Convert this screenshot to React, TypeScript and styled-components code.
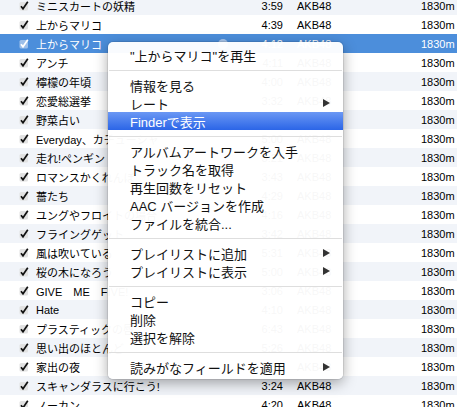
import * as React from 'react';
import styled, { createGlobalStyle } from 'styled-components';

const GlobalStyle = createGlobalStyle`
    html, body {
        margin: 0;
        padding: 0;
        background: #fff;
        overflow: hidden;
    }
    body {
        font-family: "Liberation Sans", "Noto Sans CJK JP", sans-serif;
    }
`

const Page = styled.div`
    position: relative;
    width: 457px;
    height: 407px;
    overflow: hidden;
`

const TrackList = styled.div`
    display: flex;
    flex-direction: column;
    margin-top: -4px;
`

const Row = styled.div<{ $odd: boolean; $selected: boolean }>`
    display: flex;
    align-items: center;
    height: 19px;
    font-size: 11px;
    white-space: nowrap;
    color: ${p => (p.$selected ? '#fff' : '#000')};
    background: ${p => (p.$selected ? '#4c8edb' : p.$odd ? '#fff' : '#f1f4f9')};
`

const CheckCell = styled.div`
    width: 36px;
    padding-left: 19px;
    box-sizing: border-box;
    display: flex;
    align-items: center;
`

const NameCell = styled.div`
    width: 196px;
    display: flex;
    align-items: center;
    overflow: hidden;
`

const Name = styled.span`
    flex: 1;
    overflow: hidden;
`

const LinkArrow = styled.span`
    width: 10px;
    height: 10px;
    margin: 0 4px 0 4px;
    border-radius: 50%;
    background: #a9c6ec;
    flex: none;
`

const TimeCell = styled.div`
    width: 51px;
    text-align: right;
`

const ArtistCell = styled.div`
    width: 124px;
    padding-left: 14px;
`

const AlbumCell = styled.div`
    flex: 1;
    overflow: hidden;
`

const Menu = styled.div`
    position: absolute;
    left: 108px;
    top: 42px;
    width: 235px;
    padding: 4px 0 3px;
    box-sizing: border-box;
    background: rgba(255, 255, 255, 0.97);
    border-radius: 5px;
    box-shadow: 0 4px 14px rgba(0, 0, 0, 0.35), 0 0 0 1px rgba(0, 0, 0, 0.08);
    display: flex;
    flex-direction: column;
    font-size: 13px;
    color: #111;
`

const MenuItem = styled.div<{ $active?: boolean }>`
    height: 18px;
    display: flex;
    align-items: center;
    padding: 0 13px 0 22px;
    white-space: nowrap;
    color: ${p => (p.$active ? '#fff' : '#111')};
    background: ${p => (p.$active ? 'linear-gradient(#6b98f4, #2b65e7)' : 'transparent')};
`

const ItemLabel = styled.span`
    flex: 1;
`

const SubArrow = styled.span`
    width: 0;
    height: 0;
    border-left: 7px solid #333;
    border-top: 4.5px solid transparent;
    border-bottom: 4.5px solid transparent;
`

const Separator = styled.div`
    height: 12px;
    display: flex;
    align-items: center;
    &::after {
        content: '';
        flex: 1;
        margin: 0 1px;
        height: 1px;
        background: #dedede;
    }
`

const CheckBox = ({ selected }: { selected: boolean }) => (
    <svg width="10" height="10" viewBox="0 0 10 10">
        <rect x="0.5" y="1" width="8.5" height="8.5" rx="1.5" fill={selected ? '#9dbfe9' : '#e2e2e2'} />
        <path d="M2 5.2 L4 7.8 L8.8 0.8" fill="none" stroke={selected ? '#fff' : '#111'} strokeWidth="1.7" />
    </svg>
)

const tracks: [string, string][] = [
    ['ミニスカートの妖精', '3:59'],
    ['上からマリコ', '4:39'],
    ['上からマリコ', '4:12'],
    ['アンチ', '4:11'],
    ['檸檬の年頃', '4:00'],
    ['恋愛総選挙', '3:32'],
    ['野菜占い', '3:14'],
    ['Everyday、カチューシャ', '5:00'],
    ['走れ!ペンギン', '3:21'],
    ['ロマンスかくれんぼ', '3:43'],
    ['薔たち', '4:29'],
    ['ユングやフロイトの場合', '4:16'],
    ['フライングゲット', '3:42'],
    ['風は吹いている', '5:31'],
    ['桜の木になろう', '5:00'],
    ['GIVE\u3000ME\u3000FIVE!', '3:06'],
    ['Hate', '4:10'],
    ['プラスティックの唇', '6:43'],
    ['思い出のほとんど', '5:26'],
    ['家出の夜', '4:35'],
    ['スキャンダラスに行こう!', '3:24'],
    ['ノーカン', '4:20'],
]

const SELECTED = 2

type Entry = { label?: string; sub?: boolean; active?: boolean; sep?: boolean }

const menu: Entry[] = [
    { label: '"上からマリコ"を再生' },
    { sep: true },
    { label: '情報を見る' },
    { label: 'レート', sub: true },
    { label: 'Finderで表示', active: true },
    { sep: true },
    { label: 'アルバムアートワークを入手' },
    { label: 'トラック名を取得' },
    { label: '再生回数をリセット' },
    { label: 'AAC バージョンを作成' },
    { label: 'ファイルを統合...' },
    { sep: true },
    { label: 'プレイリストに追加', sub: true },
    { label: 'プレイリストに表示', sub: true },
    { sep: true },
    { label: 'コピー' },
    { label: '削除' },
    { label: '選択を解除' },
    { sep: true },
    { label: '読みがなフィールドを適用', sub: true },
]

export default function App() {
    return (
        <Page>
            <GlobalStyle />
            <TrackList>
                {tracks.map(([name, time], i) => {
                    const selected = i === SELECTED
                    return (
                        <Row key={i} $odd={i % 2 === 1} $selected={selected}>
                            <CheckCell>
                                <CheckBox selected={selected} />
                            </CheckCell>
                            <NameCell>
                                <Name>{name}</Name>
                                {selected && <LinkArrow />}
                            </NameCell>
                            <TimeCell>{time}</TimeCell>
                            <ArtistCell>AKB48</ArtistCell>
                            <AlbumCell>1830m</AlbumCell>
                        </Row>
                    )
                })}
            </TrackList>
            <Menu>
                {menu.map((m, i) =>
                    m.sep ? (
                        <Separator key={i} />
                    ) : (
                        <MenuItem key={i} $active={m.active}>
                            <ItemLabel>{m.label}</ItemLabel>
                            {m.sub && <SubArrow />}
                        </MenuItem>
                    )
                )}
            </Menu>
        </Page>
    )
}
